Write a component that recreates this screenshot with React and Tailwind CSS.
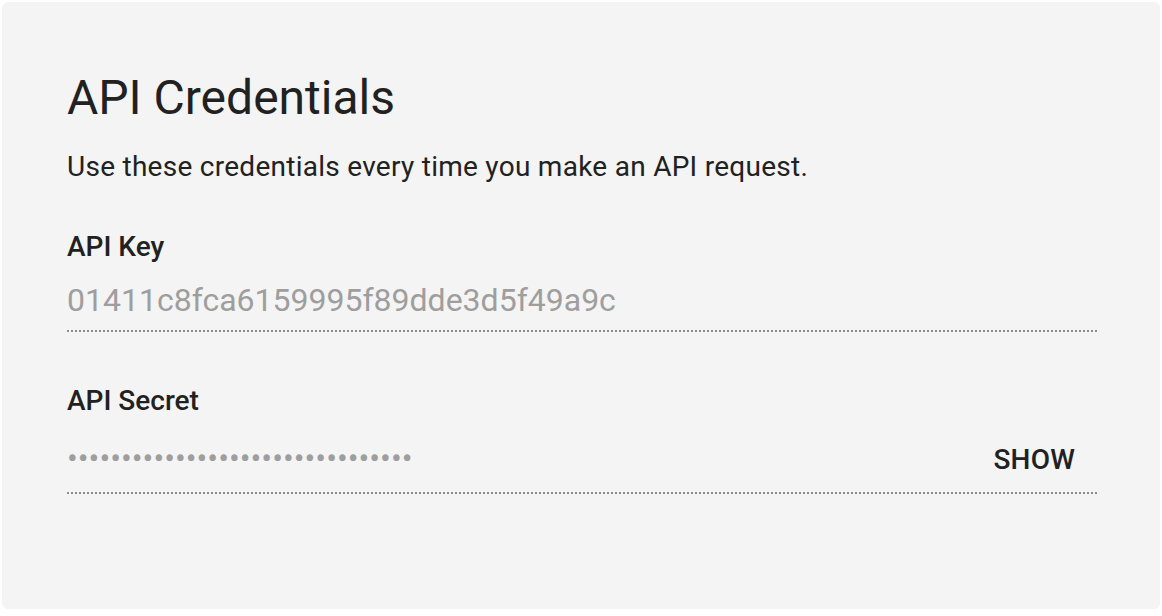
const secretMask = "•".repeat(32);

const Field = ({ label, children, className = "" }) => (
  <div className={className}>
    <div className="text-[28px] leading-[28px] font-medium text-[#212121]">
      {label}
    </div>
    {children}
  </div>
);

const App = () => {
  return (
    <div className="w-[1162px] h-[616px] bg-white p-[2px] font-['Roboto',sans-serif]">
      <section className="w-[1158px] h-[607px] rounded-[6px] bg-[#f4f4f4] pl-[65px] pr-[63px] pt-[72px]">
        <h1 className="text-[48px] leading-[48px] font-normal text-[#212121]">
          API Credentials
        </h1>
        <p className="mt-[31px] text-[28px] leading-[28px] tracking-[0.27px] text-[#212121]">
          Use these credentials every time you make an API request.
        </p>

        <Field label="API Key" className="mt-[52px]">
          <div className="mt-[19px] pb-[10px] border-b-2 border-dotted border-[#8c8c8c] text-[32px] leading-[40px] text-[#9e9e9e]">
            01411c8fca6159995f89dde3d5f49a9c
          </div>
        </Field>

        <Field label="API Secret" className="mt-[55px]">
          <div className="mt-[23px] pb-[14px] border-b-2 border-dotted border-[#8c8c8c] flex items-baseline justify-between">
            <span className="text-[32px] leading-[40px] text-[#9e9e9e]">
              {secretMask}
            </span>
            <button className="mr-[22px] text-[28px] leading-[28px] font-medium tracking-[0.2px] text-[#212121]">
              SHOW
            </button>
          </div>
        </Field>
      </section>
    </div>
  );
};

export default App;
